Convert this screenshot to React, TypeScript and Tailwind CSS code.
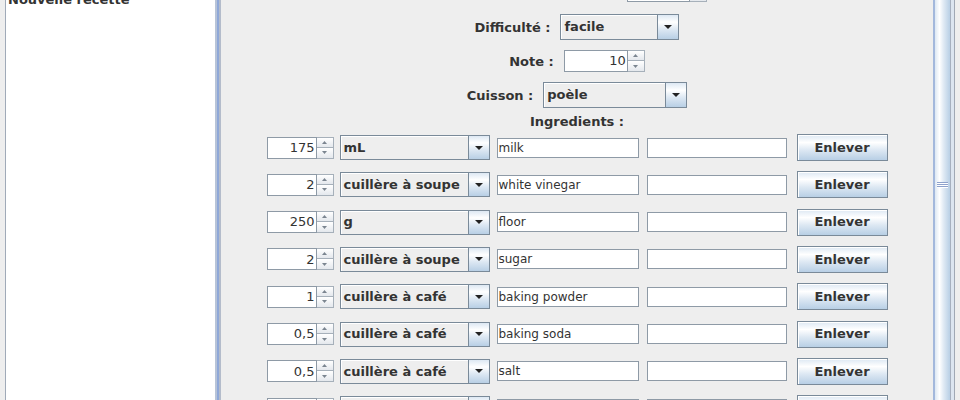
import React from 'react';

type Ingredient = { qty: string; unit: string; name: string };

const ingredients: Ingredient[] = [
  { qty: '175', unit: 'mL', name: 'milk' },
  { qty: '2', unit: 'cuillère à soupe', name: 'white vinegar' },
  { qty: '250', unit: 'g', name: 'floor' },
  { qty: '2', unit: 'cuillère à soupe', name: 'sugar' },
  { qty: '1', unit: 'cuillère à café', name: 'baking powder' },
  { qty: '0,5', unit: 'cuillère à café', name: 'baking soda' },
  { qty: '0,5', unit: 'cuillère à café', name: 'salt' },
  { qty: '1', unit: 'pincée', name: 'butter' },
];

const DownArrow = () => (
  <svg width="8" height="4" viewBox="0 0 8 4">
    <path d="M0 0H8L4 4Z" fill="#222" />
  </svg>
);

const SpinButton = ({ up }: { up?: boolean }) => (
  <div
    className={`flex h-[11px] items-center justify-center border border-l-0 border-[#a6b0ba] bg-[linear-gradient(to_bottom,#ffffff,#e4e8ed)] ${
      up ? '' : 'border-t-0'
    }`}
  >
    <svg width="5" height="3" viewBox="0 0 5 3">
      {up ? <path d="M2.5 0L5 3H0Z" fill="#7b8590" /> : <path d="M0 0H5L2.5 3Z" fill="#7b8590" />}
    </svg>
  </div>
);

const Spinner = ({ value, fieldClass }: { value: string; fieldClass: string }) => (
  <div className="flex h-[22px]">
    <div
      className={`${fieldClass} flex items-center justify-end border border-[#8e9aa6] bg-white pr-[1px] text-[13px] text-[#333]`}
    >
      {value}
    </div>
    <div className="flex w-[17px] flex-col">
      <SpinButton up />
      <SpinButton />
    </div>
  </div>
);

const Combo = ({ value, boxClass }: { value: string; boxClass: string }) => (
  <div className={`${boxClass} flex border border-[#7a8a99] bg-[#eeeeee] shadow-[inset_1px_1px_0_#ffffff]`}>
    <div className="flex flex-1 items-center overflow-hidden whitespace-nowrap pl-[3px] text-[13px] font-bold text-[#333]">
      {value}
    </div>
    <div className="flex w-[21px] items-center justify-center border-l border-[#7a8a99] bg-[linear-gradient(to_bottom,#dde8f3_0%,#ffffff_30%,#dde8f3_60%,#b8cfe5_100%)]">
      <DownArrow />
    </div>
  </div>
);

const TextField = ({ value, w }: { value: string; w: string }) => (
  <div
    className={`${w} flex h-[20px] items-center border border-[#8e9aa6] bg-white pl-[1px] text-[12px] text-[#333] shadow-[inset_0_-1px_0_#ffffff]`}
  >
    {value}
  </div>
);

const Label = ({ text }: { text: string }) => (
  <span className="whitespace-nowrap text-[13px] font-bold leading-[15px] text-[#333]">{text}</span>
);

export default function App() {
  return (
    <div className="flex h-[400px] w-[960px] overflow-hidden bg-[#eeeeee] font-['DejaVu_Sans',sans-serif]">
      {/* recipe list */}
      <div className="w-[5px] shrink-0" />
      <div className="w-[210px] shrink-0 border-l border-[#a0aab8] bg-white pl-[2px]">
        <div className="-mt-[8px] text-[13px] font-bold leading-[15px] text-[#333]">Nouvelle recette</div>
      </div>
      <div className="w-[2px] shrink-0 bg-[#b8c4d8]" />
      <div className="w-[2px] shrink-0 bg-[#8fa8d8]" />
      <div className="w-[2px] shrink-0 bg-[#b4bccb]" />

      {/* form */}
      <div className="flex w-[712px] shrink-0 flex-col items-center">
        <div className="-mt-[20px] flex h-[22px] items-center gap-[10px]">
          <Label text="Temps de préparation :" />
          <Spinner value="15" fieldClass="w-[63px]" />
        </div>
        <div className="mt-[12px] flex h-[26px] items-center gap-[10px]">
          <Label text="Difficulté :" />
          <Combo value="facile" boxClass="h-[26px] w-[119px]" />
        </div>
        <div className="mt-[10px] flex h-[22px] items-center gap-[10px]">
          <Label text="Note :" />
          <Spinner value="10" fieldClass="w-[64px]" />
        </div>
        <div className="mt-[10px] flex h-[26px] items-center gap-[10px]">
          <Label text="Cuisson :" />
          <Combo value="poèle" boxClass="h-[26px] w-[144px]" />
        </div>
        <div className="mt-[6px] flex h-[15px] items-center">
          <Label text="Ingredients :" />
        </div>
        <div className="mt-[5px] flex flex-col gap-[10.33px]">
          {ingredients.map((ing, i) => (
            <div key={i} className="flex h-[27px] items-center">
              <Spinner value={ing.qty} fieldClass="w-[50px]" />
              <div className="ml-[6px]">
                <Combo value={ing.unit} boxClass="h-[25px] w-[150px]" />
              </div>
              <div className="ml-[7px]">
                <TextField value={ing.name} w="w-[142px]" />
              </div>
              <div className="ml-[8px]">
                <TextField value="" w="w-[140px]" />
              </div>
              <button className="ml-[10px] flex h-[27px] w-[91px] items-center justify-center border border-[#7a8a99] bg-[linear-gradient(to_bottom,#dde8f3_0%,#ffffff_30%,#dde8f3_60%,#b8cfe5_100%)] text-[13px] font-bold text-[#333] shadow-[inset_1px_1px_0_#ffffff]">
                Enlever
              </button>
            </div>
          ))}
        </div>
      </div>

      {/* scrollbar */}
      <div className="relative w-[17px] shrink-0 border-l-2 border-[#a3b8dc] bg-[linear-gradient(to_right,#dde8f3_0%,#ffffff_30%,#dde8f3_60%,#b8cfe5_100%)]">
        <div className="absolute left-[2px] top-[182px] flex w-[11px] flex-col">
          <div className="h-[1px] bg-[#8ea2cc]" />
          <div className="h-[1px] bg-white" />
          <div className="h-[1px] bg-[#8ea2cc]" />
          <div className="h-[1px] bg-white" />
          <div className="h-[1px] bg-[#8ea2cc]" />
          <div className="h-[1px] bg-white" />
        </div>
      </div>
      <div className="w-[1px] shrink-0 bg-[#a6b0bf]" />
      <div className="w-[3px] shrink-0 bg-[#dce5f0]" />
      <div className="w-[1px] shrink-0 bg-[#a0a8b4]" />
      <div className="flex-1" />
    </div>
  );
}
